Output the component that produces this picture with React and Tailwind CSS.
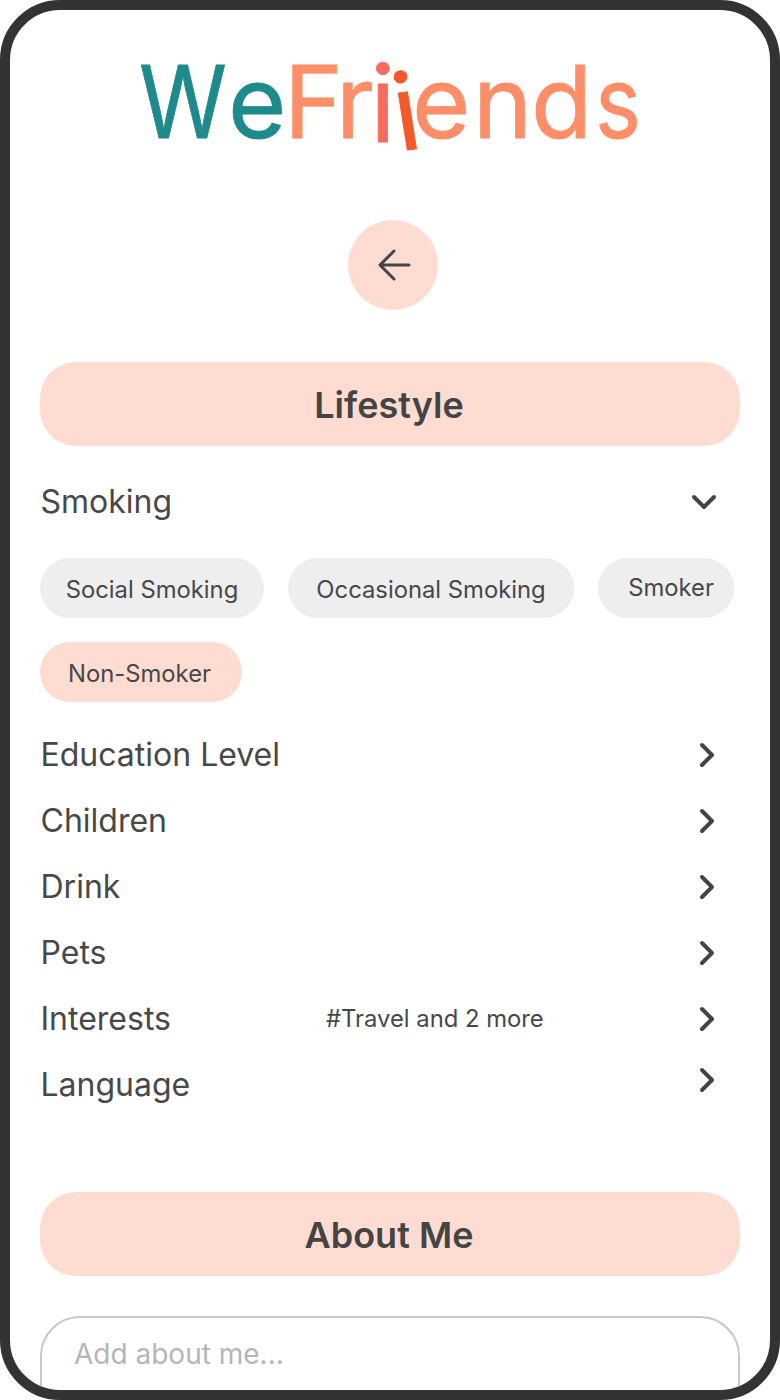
import React from "react";

const sans = "font-['Inter','Noto_Sans',sans-serif]";

function Logo() {
  const letters = [
    ["W", 139, "#1f8a8c", 88],
    ["e", 228, "#1f8a8c"],
    ["F", 284, "#fe8e68"],
    ["r", 336, "#fe8e68"],
    ["e", 412, "#fe8e68"],
    ["n", 473, "#fe8e68"],
    ["d", 531, "#fe8e68"],
    ["s", 595, "#fe8e68", 46],
  ];
  return (
    <svg width="760" height="170" viewBox="10 10 760 170" className="block shrink-0">
      <g fontFamily="Inter, sans-serif" fontSize="100" fontWeight="400" strokeWidth="0.8" strokeLinejoin="round">
        {letters.map(([c, x, col, w], i) => (
          <text key={i} x={x} y="138" fill={col} stroke={col} textLength={w} lengthAdjust={w ? "spacingAndGlyphs" : undefined}>
            {c}
          </text>
        ))}
        <text x="370" y="142" fontSize="106" fill="#f76c60" stroke="#f76c60">i</text>
        <text x="399" y="149" fontSize="106" fill="#f35a2a" stroke="#f35a2a" transform="rotate(-9 415 149)">i</text>
      </g>
    </svg>
  );
}

function ChevronRight({ className = "" }) {
  return (
    <svg width="16" height="26" viewBox="0 0 16 26" fill="none" stroke="#444444" strokeWidth="4" strokeLinecap="round" strokeLinejoin="round" className={className}>
      <path d="M3 3 L13 13 L3 23" />
    </svg>
  );
}

function Row({ label, note, lift }) {
  return (
    <div className="relative flex h-[66px] items-center">
      <span className="pl-[0.5px] text-[32px] leading-none text-[#484848]">{label}</span>
      {note && (
        <span className="absolute left-[286px] top-[18px] text-[23.8px] leading-[30px] text-[#484848]">{note}</span>
      )}
      <ChevronRight className={lift ? "absolute left-[659px] top-[15px]" : "absolute left-[659px] top-[20px]"} />
    </div>
  );
}

function Chip({ children, active, tight, className = "" }) {
  return (
    <div
      className={`flex h-[60px] items-center justify-center rounded-[30px] text-[23.8px] text-[#484848] ${
        active ? "bg-[#fedcd1] w-[202px] pr-[3px]" : "bg-[#eeeeee]"
      } ${tight ? "w-[136px]" : "pt-[4px]"} ${className}`}
    >
      {children}
    </div>
  );
}

function Band({ children, className = "" }) {
  return (
    <div className={`flex h-[84px] items-center justify-center rounded-[36px] bg-[#fedcd1] pt-[1px] pr-[2px] text-[36px] font-semibold text-[#444444] ${className}`}>
      {children}
    </div>
  );
}

export default function App() {
  return (
    <div className={`relative h-[1400px] w-[780px] overflow-hidden rounded-[60px] border-[10px] border-[#333333] bg-white ${sans}`}>
      <Logo />
      <div className="mt-[40px] flex justify-center pl-[6px]">
        <div className="flex h-[90px] w-[90px] items-center justify-center rounded-full bg-[#fedcd1]">
          <svg width="36" height="36" viewBox="0 0 36 36" fill="none" stroke="#444444" strokeWidth="3" strokeLinecap="round" strokeLinejoin="round" className="ml-[3px]">
            <path d="M32 18 H3 M17 4 L3 18 L17 32" />
          </svg>
        </div>
      </div>
      <div className="px-[30px]">
        <Band className="mt-[52px]">Lifestyle</Band>
        <div className="relative mt-[23px] flex h-[66px] items-center">
          <span className="pl-[0.5px] text-[32px] leading-none text-[#484848]">Smoking</span>
          <svg width="26" height="16" viewBox="0 0 26 16" fill="none" stroke="#444444" strokeWidth="4" strokeLinecap="round" strokeLinejoin="round" className="absolute left-[651px] top-[25px]">
            <path d="M3 3 L13 13 L23 3" />
          </svg>
        </div>
        <div className="mt-[23px] flex flex-wrap gap-[24px]">
          <Chip className="w-[224px]">Social Smoking</Chip>
          <Chip className="w-[286px]">Occasional Smoking</Chip>
          <Chip tight className="pl-[10px]">Smoker</Chip>
          <Chip active>Non-Smoker</Chip>
        </div>
        <div className="mt-[20px]">
          <Row label="Education Level" />
          <Row label="Children" />
          <Row label="Drink" />
          <Row label="Pets" />
          <Row label="Interests" note="#Travel and 2 more" />
          <Row label="Language" lift />
        </div>
        <Band className="mt-[74px]">About Me</Band>
        <div className="mt-[40px] h-[200px] rounded-[40px] border-2 border-[#c8c8c8] px-[32px] pt-[16px] text-[28px] leading-[40px] text-[#b5b5bb]">
          Add about me...
        </div>
      </div>
    </div>
  );
}
